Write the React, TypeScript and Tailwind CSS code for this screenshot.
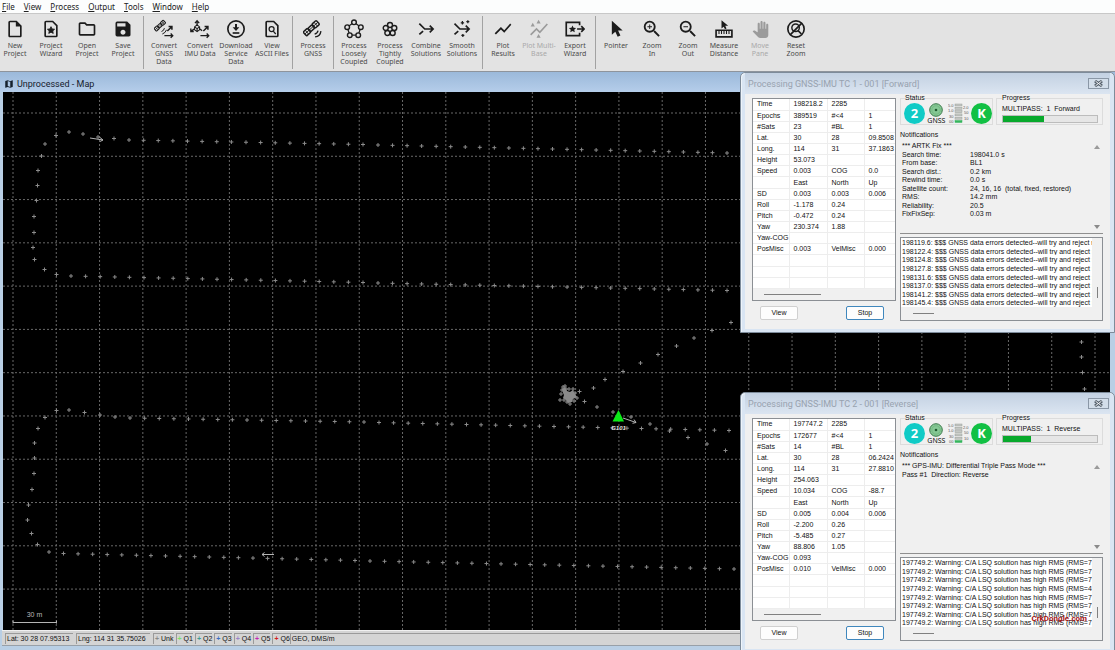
import type { ReactNode } from 'react';
import {
  MdMap,
  MdOutlineFolder,
  MdOutlineInsertDriveFile,
  MdPanTool,
  MdSave,
  MdShowChart,
  MdZoomIn,
  MdZoomOut,
} from 'react-icons/md';

const menus = ['File', 'View', 'Process', 'Output', 'Tools', 'Window', 'Help'];

type Tool = { icon: ReactNode; lines: string[]; disabled?: boolean };

function Glyph({ children }: { children: ReactNode }) {
  return (
    <svg viewBox="0 0 24 24" className="h-5 w-5" fill="none" stroke="currentColor" strokeWidth="2">
      {children}
    </svg>
  );
}

const star = 'M12 9.2l1.3 2.7 3 .4-2.2 2 .6 3-2.7-1.5-2.7 1.5.6-3-2.2-2 3-.4z';
const page = 'M14 3H6a1 1 0 0 0-1 1v16a1 1 0 0 0 1 1h12a1 1 0 0 0 1-1V8z';

function Satellite({ x, y, size }: { x: number; y: number; size: number }) {
  return (
    <g transform={`translate(${x} ${y}) rotate(-42) scale(${size})`} strokeWidth="1.7">
      <rect x="-10" y="-3" width="6.5" height="6" rx="1" />
      <rect x="-3" y="-2.5" width="6" height="5" rx="1" />
      <rect x="3.5" y="-3" width="6.5" height="6" rx="1" />
      <path d="M-6.8-3v6M6.8-3v6M-10 0h20" strokeWidth="1" />
    </g>
  );
}

function Ring({ radius, dot }: { radius: number; dot: number }) {
  const nodes = [0, 1, 2, 3, 4].map((n) => {
    const a = (n * 72 - 90) * (Math.PI / 180);
    return [12 + radius * Math.cos(a), 12.5 + radius * Math.sin(a)];
  });
  return (
    <Glyph>
      <polygon points={nodes.map((p) => p.join(',')).join(' ')} strokeWidth="1.5" />
      {nodes.map(([x, y]) => (
        <circle key={x} cx={x} cy={y} r={dot} fill="#e3e3e3" strokeWidth="1.7" />
      ))}
    </Glyph>
  );
}

const convertArrows = (
  <>
    <path d="M16 14.5l5-5M17.500 9H21.500V13" strokeWidth="1.8" />
    <path d="M12.500 20h10M20 17.500l2.500 2.500-2.500 2.500" strokeWidth="1.6" />
  </>
);

const toolGroups: Tool[][] = [
  [
    { icon: <MdOutlineInsertDriveFile className="h-5 w-5" />, lines: ['New', 'Project'] },
    {
      icon: (
        <Glyph>
          <path d={page} />
          <path d={star} fill="currentColor" strokeWidth="1" />
        </Glyph>
      ),
      lines: ['Project', 'Wizard'],
    },
    { icon: <MdOutlineFolder className="h-5 w-5" />, lines: ['Open', 'Project'] },
    { icon: <MdSave className="h-5 w-5" />, lines: ['Save', 'Project'] },
  ],
  [
    {
      icon: (
        <Glyph>
          <Satellite x={7} y={8} size={0.75} />
          <path d="M9 15a5 5 0 0 0 3.500-4M10 18a8 8 0 0 0 5-5" strokeWidth="1.2" />
          {convertArrows}
        </Glyph>
      ),
      lines: ['Convert', 'GNSS', 'Data'],
    },
    {
      icon: (
        <Glyph>
          <path d="M8.500 8V3M6 5l2.500-3L11 5" strokeWidth="1.6" />
          <path d="M5.500 9.500l3-2.500 3 2.500v3.500l-3 2-3-2zM8.500 11.500V15M5.500 9.500l3 2 3-2" strokeWidth="1.3" />
          <path d="M5 12l-3.500 2.500M1 11.500v3.500h3.500M12 12l2.500 2" strokeWidth="1.6" />
          {convertArrows}
        </Glyph>
      ),
      lines: ['Convert', 'IMU Data'],
    },
    {
      icon: (
        <Glyph>
          <circle cx="12" cy="12" r="9.800" />
          <path d="M8 16.800h8" />
          <path d="M12 6v5" strokeWidth="2.400" />
          <path d="M8 10h8l-4 4.500z" fill="currentColor" stroke="none" />
        </Glyph>
      ),
      lines: ['Download', 'Service', 'Data'],
    },
    {
      icon: (
        <Glyph>
          <path d={page} />
          <circle cx="11.500" cy="12" r="3" strokeWidth="1.500" />
          <path d="M13.500 14.500l3 3.500" strokeWidth="1.500" />
        </Glyph>
      ),
      lines: ['View', 'ASCII Files'],
    },
  ],
  [
    {
      icon: (
        <Glyph>
          <Satellite x={10} y={11} size={1.05} />
          <path d="M14 18a5 5 0 0 0 4-4M14.500 21.500a8 8 0 0 0 7-7" strokeWidth="1.600" />
        </Glyph>
      ),
      lines: ['Process', 'GNSS'],
    },
  ],
  [
    { icon: <Ring radius={8.6} dot={2.8} />, lines: ['Process', 'Loosely', 'Coupled'] },
    { icon: <Ring radius={5.4} dot={3} />, lines: ['Process', 'Tightly', 'Coupled'] },
    {
      icon: (
        <Glyph>
          <path d="M4 5.500l6.500 6.500H20M16.500 8l4 4-4 4M4 18.500l4.500-4" />
        </Glyph>
      ),
      lines: ['Combine', 'Solutions'],
    },
    {
      icon: (
        <Glyph>
          <path d="M3 5.500l6.500 6.500H20M16.500 8l4 4-4 4M3 18.500l4.500-4" />
          <path d="M12.500 2.500v4M10.500 4.500h4M19 1.500v3.500M17.200 3.200h3.600M13 18v3.500M11.200 19.700h3.600" strokeWidth="1.500" />
        </Glyph>
      ),
      lines: ['Smooth', 'Solutions'],
    },
  ],
  [
    { icon: <MdShowChart className="h-5 w-5" />, lines: ['Plot', 'Results'] },
    {
      icon: (
        <Glyph>
          <path d="M2 19l7-7 4 4 9-10" />
          <path d="M2 9l2.500-4.500L7 9zM9 5.500L11.500 1 14 5.500zM9 22.500l2.500-4.500 2.500 4.500z" fill="currentColor" stroke="none" />
        </Glyph>
      ),
      lines: ['Plot Multi-', 'Base'],
      disabled: true,
    },
    {
      icon: (
        <Glyph>
          <path d="M17.500 7.500V4H1.500v16h16v-3.500M14.500 12h8M19.500 8.500l3.500 3.500-3.500 3.500" />
          <path d={star} fill="currentColor" stroke="none" transform="translate(-3 -1.500)" />
        </Glyph>
      ),
      lines: ['Export', 'Wizard'],
    },
  ],
  [
    {
      icon: (
        <Glyph>
          <path d="M7 2v17l4.200-3.800 2.800 6 3.300-1.500-2.800-5.800H20z" fill="currentColor" stroke="none" />
        </Glyph>
      ),
      lines: ['Pointer'],
    },
    { icon: <MdZoomIn className="h-[22px] w-[22px]" />, lines: ['Zoom', 'In'] },
    { icon: <MdZoomOut className="h-[22px] w-[22px]" />, lines: ['Zoom', 'Out'] },
    {
      icon: (
        <Glyph>
          <path d="M9 1.500v10l2.600-2.300 1.600 3 1.800-.8-1.500-3.400H17z" fill="currentColor" stroke="none" />
          <path d="M2.500 13.500h19v8h-19z" />
          <path d="M6 14v4M9 14v4M12 14v4M15 14v4M18 14v4" strokeWidth="1.300" />
        </Glyph>
      ),
      lines: ['Measure', 'Distance'],
    },
    { icon: <MdPanTool className="h-[17px] w-[17px]" />, lines: ['Move', 'Pane'], disabled: true },
    {
      icon: (
        <Glyph>
          <circle cx="12" cy="12" r="9.800" />
          <circle cx="11.500" cy="10.500" r="4.500" strokeWidth="1.700" />
          <path d="M14.500 14l4 4M19 5L5 19" />
        </Glyph>
      ),
      lines: ['Reset', 'Zoom'],
    },
  ],
];

function MenuBar() {
  return (
    <nav className="flex h-[13px] items-center gap-[9px] bg-[#fcfdfd] px-[2px] font-['Noto_Sans',sans-serif] text-[8px] leading-[12px] text-[#222]">
      {menus.map((name) => (
        <button key={name} type="button">
          <span className="underline">{name[0]}</span>
          {name.slice(1)}
        </button>
      ))}
    </nav>
  );
}

function Toolbar() {
  return (
    <div className="flex h-[59px] items-stretch overflow-hidden border-t border-b border-t-[#c8c8c8] border-b-[#8e949c] bg-[#e3e3e3] py-[2px]">
      <div className="-ml-[3px] flex">
        {toolGroups.map((group, i) => (
          <div key={i} className="flex">
            {i > 0 && <div className="mx-[2px] w-px bg-[#a2a2a2]" />}
            {group.map((tool) => (
              <button
                key={tool.lines.join(' ')}
                type="button"
                disabled={tool.disabled}
                className="flex w-9 flex-col items-center pt-[3px] text-[#1c1c1c] disabled:text-[#9b9b9b]"
              >
                <span className="flex h-5 items-center">{tool.icon}</span>
                <span className="mt-[3px] font-['Noto_Sans',sans-serif] text-[7px] leading-[8px] whitespace-nowrap opacity-80">
                  {tool.lines.map((line) => (
                    <span key={line} className="block">
                      {line}
                    </span>
                  ))}
                </span>
              </button>
            ))}
          </div>
        ))}
      </div>
    </div>
  );
}

// ---- map ----

type Point = [number, number];

function run(from: Point, to: Point, count: number): Point[] {
  return Array.from({ length: count }, (_, i) => [
    from[0] + ((to[0] - from[0]) * i) / (count - 1),
    from[1] + ((to[1] - from[1]) * i) / (count - 1),
  ]);
}

const track: Point[] = [
  [69, 132], [83, 134], [98, 137], [114, 138.5], ...run([129, 140], [363, 144.5], 17), ...run([378, 145], [727, 153], 25),
  [56, 135.5], [45, 144], [41.5, 156], [38, 170.5], [37.5, 185.5], [36.5, 200.5], [34, 216.5], [34, 232.5],
  [33, 247.5], [34.5, 259.5], [44.5, 269.5], [56.5, 274.5], ...run([71, 276], [363, 282.5], 21), ...run([378, 283], [727, 290.5], 25),
  [69, 410], [84.5, 412.5], [100, 415], [115, 417], ...run([130, 418], [364, 422], 17), ...run([379, 422.5], [729, 430.5], 25),
  [56.5, 410.5], [45, 417.5], [38, 428.5], [34.5, 443], [34.5, 458], [34, 473.5], [32, 489.5], [28.5, 505],
  [27.5, 520], [31.5, 533.5], [37.5, 544.5], [49, 552], ...run([63.5, 553.5], [355, 560.5], 21), ...run([370, 561], [734, 569], 26),
  [579.5, 391.5], [593.5, 388], [605, 379.5], [623, 371.5], [640.5, 363], [658, 354.5], [676.5, 346], [694, 338], [712, 330.5], [731, 322.5],
  [584.5, 401.5], [597, 407], [613, 412], [631, 417], [650, 424], [669.5, 431], [688, 437.5], [707, 444], [725.5, 450.5],
  [1081.5, 342], [1081.5, 357], [1082.5, 372.5], [1084.5, 389],
];

// fixes logged while the rover stood still
const parked: Point[] = [
  [561, 394], [562, 390], [563, 387], [565, 386], [566, 389], [569, 389], [573, 389], [575, 393],
  [577, 398], [574, 401], [570, 404], [567, 402], [564, 400], [560, 400], [568, 396], [572, 395],
];

const crosses = (points: Point[]) => points.map(([x, y]) => `M${x - 2} ${y}h4M${x} ${y - 2}v4`).join('');

const GRID = 43.28;
const gridSteps = Array.from({ length: 60 }, (_, i) => i);

function MapCanvas() {
  return (
    <svg className="block h-full w-full bg-black" role="img" aria-label="Trajectory map">
      <g transform="translate(-3 -92)">
        <g stroke="#686868" strokeWidth="1" strokeDasharray="2 2">
          {gridSteps.map((i) => (
            <line key={`v${i}`} x1={13 + i * GRID} x2={13 + i * GRID} y1="92" y2="3000" />
          ))}
          {gridSteps.map((i) => (
            <line key={`h${i}`} x1="3" x2="4000" y1={113 + i * GRID} y2={113 + i * GRID} />
          ))}
        </g>
        <path d={crosses(track)} stroke="#8c8c8c" strokeWidth="1" fill="none" />
        <path d={crosses(parked)} stroke="#8c8c8c" strokeWidth="1" fill="none" />
        <path d="M562 389l3-2 2 4 3 1 3-2 2 4 2 3-4 2-1 3-4 1-2-3-3-2 1-3-1-2z" fill="#8a8a8a" />
        <g stroke="#b4b4b4" fill="none">
          <path d="M90 138l13 2M100 137.500l3 2.500-3 1.500" />
          <path d="M274 554.500h-12M264.500 552.500l-2.500 2 2.500 2" />
          <path d="M623 418l13 4.500M634 419.500l2 3-3.500.800" />
          <path d="M13 620.500v3M56.500 620.500v3M13 622.500h43.500" />
        </g>
        <path d="M618.500 410l5.500 11.500h-11.500z" fill="#0ceb18" />
        <text x="618.500" y="430" textAnchor="middle" className="fill-[#e8e8e8] font-['Liberation_Sans',sans-serif] text-[6px] font-bold italic">
          G101
        </text>
        <text x="34.500" y="616.500" textAnchor="middle" className="fill-[#b8b8b8] font-['Liberation_Sans',sans-serif] text-[7px]">
          30 m
        </text>
      </g>
    </svg>
  );
}

const qualities = [
  { label: 'Unk', color: 'text-[#8a8a8a]' },
  { label: 'Q1', color: 'text-[#7be36c]' },
  { label: 'Q2', color: 'text-[#3f9c94]' },
  { label: 'Q3', color: 'text-[#3a6fc4]' },
  { label: 'Q4', color: 'text-[#9a83c8]' },
  { label: 'Q5', color: 'text-[#c426b4]' },
  { label: 'Q6', color: 'text-[#d42020]' },
];

function StatusBar() {
  const pane = 'h-[11px] border-t border-l border-[#9a9a9a] pl-px';
  return (
    <footer className="flex h-[16px] items-center border-t border-b border-t-[#f0f0f0] border-b-[#98a0a8] bg-[#d4d4d4] pl-[3px] text-[7px] leading-[10px] whitespace-nowrap text-[#111]">
      <span className={`${pane} w-[68px]`}>Lat: 30 28 07.95313</span>
      <span className={`${pane} ml-[3px] w-[74px]`}>Lng: 114 31 35.75026</span>
      <span className="ml-[3px] flex gap-[2px]">
        {qualities.map((q) => (
          <span key={q.label} className={pane}>
            <span className={`${q.color} font-bold`}>+</span> {q.label}
          </span>
        ))}
      </span>
      <span className={`${pane} flex-1`}>GEO, DMS/m</span>
    </footer>
  );
}

function MapWindow() {
  return (
    <section className="flex min-h-0 flex-1 flex-col bg-[#b9cfe5] pb-1">
      <header className="flex h-5 items-center gap-[3px] bg-linear-to-b from-[#9bb9da] to-[#b5cdea] pt-1 pl-1 font-[Roboto,sans-serif] text-[9px] leading-[12px] text-[#15202c]">
        <MdMap className="h-[10px] w-[10px]" />
        <h1>Unprocessed - Map</h1>
      </header>
      <div className="min-h-0 flex-1 pr-[5px] pl-[3px]">
        <MapCanvas />
      </div>
      <div className="pr-[5px] pl-[2px]">
        <StatusBar />
      </div>
    </section>
  );
}

// ---- processing dialogs ----

type Job = {
  title: string;
  pass: string;
  percent: number;
  rows: string[][];
  notes: string[][];
  log: string[];
};

const forward: Job = {
  title: 'Processing GNSS-IMU TC 1 - 001 [Forward]',
  pass: 'Forward',
  percent: 44,
  rows: [
    ['Time', '198218.2', '2285', ''],
    ['Epochs', '389519', '#<4', '1'],
    ['#Sats', '23', '#BL', '1'],
    ['Lat.', '30', '28', '09.8508'],
    ['Long.', '114', '31', '37.1863'],
    ['Height', '53.073', '', ''],
    ['Speed', '0.003', 'COG', '0.0'],
    ['', 'East', 'North', 'Up'],
    ['SD', '0.003', '0.003', '0.006'],
    ['Roll', '-1.178', '0.24', ''],
    ['Pitch', '-0.472', '0.24', ''],
    ['Yaw', '230.374', '1.88', ''],
    ['Yaw-COG', '', '', ''],
    ['PosMisc', '0.003', 'VelMisc', '0.000'],
  ],
  notes: [
    ['*** ARTK Fix ***'],
    ['Search time:', '198041.0 s'],
    ['From base:', 'BL1'],
    ['Search dist.:', '0.2 km'],
    ['Rewind time:', '0.0 s'],
    ['Satellite count:', '24, 16, 16  (total, fixed, restored)'],
    ['RMS:', '14.2 mm'],
    ['Reliability:', '20.5'],
    ['FixFixSep:', '0.03 m'],
  ],
  log: ['198119.6', '198122.4', '198124.8', '198127.8', '198131.6', '198137.0', '198141.2', '198145.4'].map(
    (t) => `${t}: $$$ GNSS data errors detected--will try and reject r`,
  ),
};

const reverse: Job = {
  title: 'Processing GNSS-IMU TC 2 - 001 [Reverse]',
  pass: 'Reverse',
  percent: 30,
  rows: [
    ['Time', '197747.2', '2285', ''],
    ['Epochs', '172677', '#<4', '1'],
    ['#Sats', '14', '#BL', '1'],
    ['Lat.', '30', '28', '06.2424'],
    ['Long.', '114', '31', '27.8810'],
    ['Height', '254.063', '', ''],
    ['Speed', '10.034', 'COG', '-88.7'],
    ['', 'East', 'North', 'Up'],
    ['SD', '0.005', '0.004', '0.006'],
    ['Roll', '-2.200', '0.26', ''],
    ['Pitch', '-5.485', '0.27', ''],
    ['Yaw', '88.806', '1.05', ''],
    ['Yaw-COG', '0.093', '', ''],
    ['PosMisc', '0.010', 'VelMisc', '0.000'],
  ],
  notes: [['*** GPS-IMU: Differential Triple Pass Mode ***'], ['Pass #1  Direction: Reverse']],
  log: ['7', '7', '7', '4', '7', '7', '7', '7'].map(
    (n) => `197749.2: Warning: C/A LSQ solution has high RMS (RMS=${n}`,
  ),
};

function DataGrid({ rows }: { rows: string[][] }) {
  const filled = [...rows, ...Array.from({ length: 3 }, () => ['', '', '', ''])];
  return (
    <div className="flex h-[203px] flex-col border border-[#8b8f94] bg-white">
      <table className="h-[190px] w-full table-fixed border-collapse leading-[10px]">
        <colgroup>
          <col className="w-9" />
          <col className="w-[38px]" />
          <col className="w-[37px]" />
          <col />
        </colgroup>
        <tbody>
          {filled.map((row, r) => (
            <tr key={r} className="h-[11px]">
              {row.map((cell, c) => (
                <td key={c} className="border-r border-b border-[#ededed] p-0 pl-1 whitespace-nowrap last:border-r-0">
                  {cell}
                </td>
              ))}
            </tr>
          ))}
        </tbody>
      </table>
      <div className="flex flex-1 items-center bg-[#f0f0f0] pl-[11px]">
        <div className="h-px w-[57px] bg-[#808080]" />
      </div>
    </div>
  );
}

const levels = [0, 1, 2, 3, 4, 5];

function StatusLights() {
  const round = "flex h-[21px] w-[21px] items-center justify-center rounded-full font-['Open_Sans',sans-serif] text-[13px] leading-[20px] font-bold text-white";
  return (
    <div className="flex h-[22px] items-center justify-between pl-[3px]">
      <span className={`${round} bg-[#10cbc6]`}>2</span>
      <span className="flex flex-col items-center font-['Noto_Sans',sans-serif] text-[7px] leading-[7px] text-[#111]">
        <svg viewBox="0 0 14 14" className="h-[14px] w-[14px]">
          <circle cx="7" cy="7" r="6.300" fill="#86c995" stroke="#3c7a4c" strokeWidth="1" />
          <circle cx="7" cy="7" r="4.200" fill="none" stroke="#6db47e" strokeWidth="0.800" />
          <circle cx="7" cy="7" r="1.300" fill="#1f5c30" />
        </svg>
        GNSS
      </span>
      <svg viewBox="0 0 21 21" className="h-[21px] w-[21px]">
        {levels.map((n) => (
          <rect
            key={n}
            x="7"
            y={1 + n * 3.3}
            width="7"
            height="2"
            fill={n === 5 ? '#35b55c' : '#c4c8c4'}
            stroke={n === 5 ? '#35b55c' : '#9a9e9a'}
            strokeWidth="0.500"
          />
        ))}
        <g className="fill-[#555] font-['Liberation_Sans',sans-serif] text-[4px]">
          <text x="0" y="4">5.0</text>
          <text x="0" y="9">1.0</text>
          <text x="1" y="15">30</text>
          <text x="1" y="20">00</text>
          <text x="15" y="6">2.0</text>
          <text x="16" y="11">50</text>
          <text x="16" y="17">10</text>
        </g>
      </svg>
      <span className={`${round} bg-[#12c044]`}>K</span>
    </div>
  );
}

function Dialog({ job, className, children }: { job: Job; className: string; children?: ReactNode }) {
  return (
    <section
      className={`${className} absolute right-0 w-[375px] rounded-t-[5px] border border-[#7d8b9a] bg-[#d9e5f3] px-1 pb-[3px] text-[7px] text-[#111] shadow-[inset_1px_1px_0_#eef4fa]`}
    >
      <header className="flex h-[21px] items-center justify-between bg-linear-to-b from-[#c3d1e2] to-[#dbe5f1] pr-px pl-[3px]">
        <h2 className="font-[Roboto,sans-serif] text-[9px] leading-[12px] text-[#98a2af]">{job.title}</h2>
        <button type="button" aria-label="Close" className="flex h-[11px] w-[21px] items-center justify-center border border-[#8a97a6] bg-[#d3deea]">
          <svg viewBox="0 0 9 7" className="h-[7px] w-[9px]" fill="none">
            <path d="M1 1l7 5M8 1l-7 5" stroke="#55606c" strokeWidth="3" />
            <path d="M1.500 1.200l6 4.600M7.500 1.200l-6 4.600" stroke="#f4f7fa" strokeWidth="1" />
          </svg>
        </button>
      </header>

      <div className="flex gap-1 bg-[#f0f0f0] pr-[7px] pb-2 pl-[7px]">
        <div className="w-[144px] shrink-0 pt-1">
          <DataGrid rows={job.rows} />
          <div className="mt-[5px] flex justify-between pr-3 pl-2">
            <button type="button" className="h-[14px] w-[38px] rounded-[2px] border border-[#d0d0d0] bg-[#fdfdfd] leading-[12px]">
              View
            </button>
            <button type="button" className="h-[14px] w-[38px] rounded-[2px] border border-[#3f87bd] bg-[#fdfdfd] leading-[12px]">
              Stop
            </button>
          </div>
        </div>

        <div className="min-w-0 flex-1">
          <div className="flex gap-[3px] leading-[8px]">
            <fieldset className="h-[31px] w-[93px] shrink-0 border border-[#dcdcdc]">
              <legend className="ml-1">Status</legend>
              <StatusLights />
            </fieldset>
            <fieldset className="h-[31px] min-w-0 flex-1 border border-[#dcdcdc] pr-1 pl-[5px]">
              <legend>Progress</legend>
              <p className="mt-[2px] mb-[2px] leading-[9px] whitespace-pre">MULTIPASS:  1  {job.pass}</p>
              <div role="progressbar" aria-valuenow={job.percent} aria-label="Progress" className="h-2 border border-[#bcbcbc] bg-[#e6e6e6]">
                <div className="h-full bg-[#08a92c]" style={{ width: `${job.percent}%` }} />
              </div>
            </fieldset>
          </div>
          <h3 className="mt-[5px] leading-[10px]">Notifications</h3>
          <div className="flex h-[94px] justify-between border-b border-[#8f8f8f] pt-px pr-[3px] pl-[2px]">
            <div className="grid h-[77px] grid-rows-9 leading-[9px] whitespace-pre">
              {job.notes.map(([name, value]) => (
                <div key={name} className="flex">
                  <span className={value ? 'w-[68px]' : ''}>{name}</span>
                  <span>{value}</span>
                </div>
              ))}
            </div>
            <div className="flex flex-col justify-between py-1">
              <svg viewBox="0 0 6 4" className="h-1 w-[6px]"><path d="M0 4l3-4 3 4z" fill="#9a9a9a" /></svg>
              <svg viewBox="0 0 6 4" className="h-1 w-[6px]"><path d="M0 0l3 4 3-4z" fill="#8a8a8a" /></svg>
            </div>
          </div>
          <div className="mt-[3px] h-[84px] border border-[#8b8f94]">
            <div className="flex h-[70px]">
              <div className="grid h-[69px] min-w-0 flex-1 grid-cols-1 grid-rows-8 overflow-hidden bg-white pl-px leading-[9px] whitespace-nowrap">
                {job.log.map((line, i) => (
                  <p key={i} className="overflow-hidden">{line}</p>
                ))}
              </div>
              <div className="flex w-[10px] items-end justify-center pb-[10px]">
                <div className="h-[11px] w-px bg-[#808080]" />
              </div>
            </div>
            <div className="pt-[5px] pl-3">
              <div className="h-px w-[21px] bg-[#808080]" />
            </div>
          </div>
        </div>
      </div>
      {children}
    </section>
  );
}

export default function App() {
  return (
    <div className="flex h-screen flex-col overflow-hidden bg-[#b9cfe5] font-['Liberation_Sans',Arial,sans-serif]">
      <MenuBar />
      <Toolbar />
      <main className="relative flex min-h-0 flex-1 flex-col overflow-hidden">
        <MapWindow />
        <Dialog job={forward} className="top-0" />
        <Dialog job={reverse} className="top-[320px]">
          <span className="absolute right-[27px] bottom-7 font-[Roboto,sans-serif] text-[8px] leading-[10px] font-bold text-[#a31212]">
            CrkDongle.com
          </span>
        </Dialog>
      </main>
    </div>
  );
}
